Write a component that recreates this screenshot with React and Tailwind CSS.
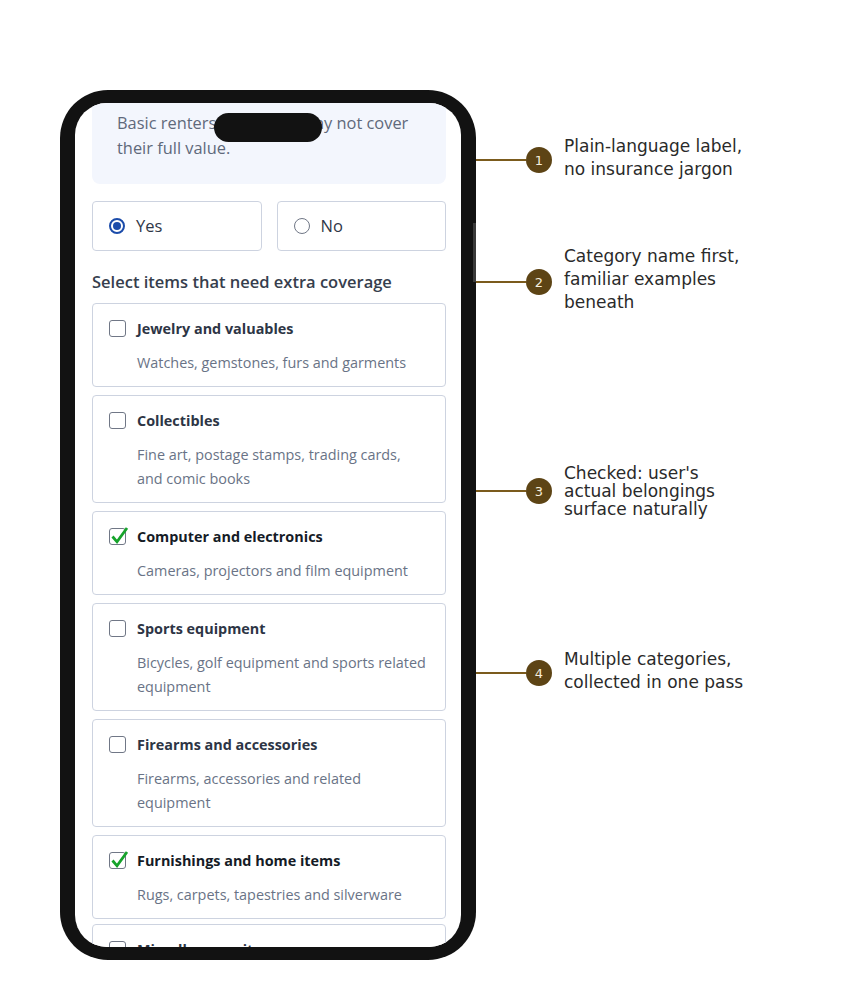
import React from "react";

const items = [
  { title: "Jewelry and valuables", desc: ["Watches, gemstones, furs and garments"], checked: false },
  { title: "Collectibles", desc: ["Fine art, postage stamps, trading cards,", "and comic books"], checked: false },
  { title: "Computer and electronics", desc: ["Cameras, projectors and film equipment"], checked: true },
  { title: "Sports equipment", desc: ["Bicycles, golf equipment and sports related", "equipment"], checked: false },
  { title: "Firearms and accessories", desc: ["Firearms, accessories and related", "equipment"], checked: false },
  { title: "Furnishings and home items", desc: ["Rugs, carpets, tapestries and silverware"], checked: true },
  { title: "Miscellaneous items", desc: ["Musical instruments and other items"], checked: false },
];

const notes = [
  { n: 1, top: "top-[147px]", lines: ["Plain-language label,", "no insurance jargon"], tight: false },
  { n: 2, top: "top-[269px]", lines: ["Category name first,", "familiar examples", "beneath"], tight: false },
  { n: 3, top: "top-[478px]", lines: ["Checked: user's", "actual belongings", "surface naturally"], tight: true },
  { n: 4, top: "top-[660px]", lines: ["Multiple categories,", "collected in one pass"], tight: false },
];

function CheckBox({ checked }) {
  return (
    <span className="relative mt-[2px] block h-[17px] w-[17px] shrink-0 rounded-[3px] border-[1.5px] border-[#707786] bg-white">
      {checked && (
        <svg
          className="absolute left-[-1.5px] top-[-3.5px] h-[20px] w-[22px] overflow-visible"
          viewBox="0 0 22 20"
        >
          <path
            d="M3.5 10.5 L8 15.8 L18 2"
            fill="none"
            stroke="#16a32b"
            strokeWidth="2.8"
            strokeLinecap="butt"
            strokeLinejoin="miter"
          />
        </svg>
      )}
    </span>
  );
}

function Radio({ label, selected }) {
  return (
    <div className="flex h-[50px] flex-1 items-center gap-[11px] rounded-[4px] border border-[#cdd3e0] bg-white pl-[16px]">
      {selected ? (
        <span className="flex h-[16px] w-[16px] items-center justify-center rounded-full border-2 border-[#1c4caa]">
          <span className="h-[8px] w-[8px] rounded-full bg-[#1c4caa]" />
        </span>
      ) : (
        <span className="h-[16px] w-[16px] rounded-full border-[1.5px] border-[#707786]" />
      )}
      <span className="text-[16.5px] leading-[24px] text-[#2f3747]">{label}</span>
    </div>
  );
}

function ItemCard({ item }) {
  return (
    <div className="rounded-[4px] border border-[#cdd3e0] bg-white px-[16px] pb-[11px] pt-[14px]">
      <div className="flex items-start gap-[11px]">
        <CheckBox checked={item.checked} />
        <div className="flex flex-col">
          <span
            className={
              "text-[14.4px] font-bold leading-[22px] " +
              (item.checked ? "text-[#151b26]" : "text-[#2d3545]")
            }
          >
            {item.title}
          </span>
          <div className="mt-[11px] text-[14.4px] leading-[24px] text-[#697386]">
            {item.desc.map((l) => (
              <span key={l} className="block whitespace-nowrap">
                {l}
              </span>
            ))}
          </div>
        </div>
      </div>
    </div>
  );
}

function Phone() {
  return (
    <div className="relative h-[870px] w-[416px] rounded-[48px] bg-[#121212] px-[15px] py-[13px]">
      <div className="h-full w-full overflow-hidden rounded-[32px] bg-white font-['Open_Sans','Noto_Sans',sans-serif]">
        <div className="flex flex-col pl-[17px] pr-[15px]">
          <div className="rounded-b-[8px] bg-[#f3f6fd] pb-[24px] pl-[25px] pt-[7px] text-[16.4px] leading-[25px] text-[#5f697b]">
            <span className="block">Basic renters insurance may not cover</span>
            <span className="block">their full value.</span>
          </div>
          <div className="mt-[17px] flex gap-[15px]">
            <Radio label="Yes" selected />
            <Radio label="No" />
          </div>
          <h2 className="mt-[19px] text-[16.5px] font-semibold leading-[24px] text-[#363e4d]">
            Select items that need extra coverage
          </h2>
          <div className="mt-[9px] flex flex-col gap-[8px]">
            {items.map((it, i) => (
              <div key={it.title} className={i === items.length - 1 ? "-mt-[3px]" : ""}>
                <ItemCard item={it} />
              </div>
            ))}
          </div>
        </div>
      </div>
      {/* dynamic island */}
      <div className="absolute left-1/2 top-[23px] h-[29px] w-[108px] -translate-x-1/2 rounded-full bg-[#121212]" />
      {/* side button */}
      <div className="absolute right-0 top-[133px] h-[59px] w-[3px] bg-[#3a3a3a]" />
    </div>
  );
}

export default function App() {
  return (
    <div className="relative h-[990px] w-[856px] overflow-hidden bg-white pl-[60px] pt-[90px]">
      <Phone />
      {notes.map((a) => (
        <div key={a.n} className={"absolute left-[476px] flex h-[26px] items-center " + a.top}>
          <span className="h-[2px] w-[50px] bg-[#7b5b1d]" />
          <span className="flex h-[26px] w-[26px] items-center justify-center rounded-full bg-[#5d4415] font-['DejaVu_Sans',sans-serif] text-[13px] leading-none text-[#f6eedc]">
            {a.n}
          </span>
          <div
            className={
              "ml-[12px] shrink-0 font-['DejaVu_Sans',sans-serif] text-[17px] text-[#2a2a2a] " +
              (a.tight ? "leading-[18px]" : "mb-[5px] leading-[23px]")
            }
          >
            {a.lines.map((l) => (
              <span key={l} className="block whitespace-nowrap">
                {l}
              </span>
            ))}
          </div>
        </div>
      ))}
    </div>
  );
}
